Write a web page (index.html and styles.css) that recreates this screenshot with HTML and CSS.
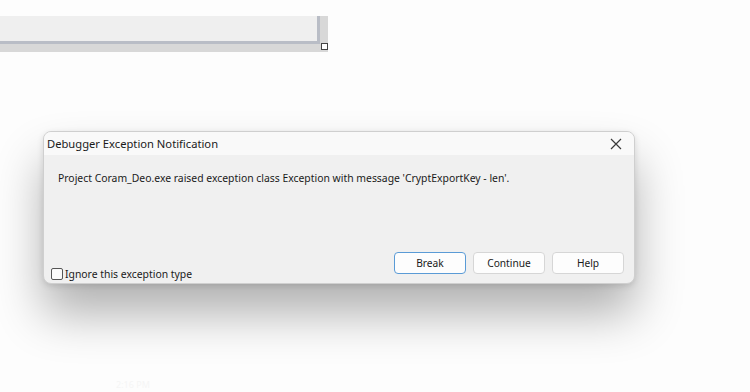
FILE: index.html
```html
<!DOCTYPE html>
<html>
<head>
<meta charset="utf-8">
<link rel="stylesheet" href="styles.css">
</head>
<body>
<div class="top">
  <div class="panel"></div>
  <div class="grip"></div>
</div>
<div class="dialog">
  <div class="titlebar">
    <span class="title">Debugger Exception Notification</span>
    <svg class="close" width="12" height="12" viewBox="0 0 12 12"><path d="M1 1L11 11M11 1L1 11" stroke="#3a3a3a" stroke-width="1.2" fill="none"/></svg>
  </div>
  <div class="content">
    <p class="msg">Project Coram_Deo.exe raised exception class Exception with message 'CryptExportKey - len'.</p>
    <div class="footer">
      <label class="check"><span class="box"></span>Ignore this exception type</label>
      <div class="buttons">
        <button class="btn default">Break</button>
        <button class="btn">Continue</button>
        <button class="btn">Help</button>
      </div>
    </div>
  </div>
</div>
<div class="taskbar"><span class="clock">2:16 PM</span></div>
</body>
</html>
```
FILE: styles.css
```css
html, body {
  margin: 0;
  padding: 0;
  background: #fdfdfd;
  width: 750px;
  height: 392px;
  overflow: hidden;
  font-family: "Noto Sans", "Open Sans", sans-serif;
}
.top {
  position: relative;
  padding-top: 16px;
  width: 328px;
  height: 34px;
}
.panel {
  width: 320px;
  height: 28px;
  box-sizing: border-box;
  background: #efefef;
  border-right: 3px solid #b9bdc6;
  border-bottom: 3px solid #b9bdc6;
  box-shadow: 3px 3px 0 5px #d8d8d8;
  clip-path: inset(0 -8px -8px 0);
}
.grip {
  position: absolute;
  left: 321px;
  top: 43px;
  width: 5px;
  height: 5px;
  border: 1px solid #444;
  background: #fff;
}
.dialog {
  margin: 81px 0 0 43px;
  width: 592px;
  height: 153px;
  box-sizing: border-box;
  border: 1px solid #cfcfcf;
  border-radius: 8px;
  background: #f0f0f0;
  box-shadow: 0 30px 48px rgba(0,0,0,0.30), 0 2px 6px rgba(0,0,0,0.12);
  display: flex;
  flex-direction: column;
  overflow: hidden;
}
.titlebar {
  height: 23px;
  background: #f9f9f9;
  display: flex;
  align-items: center;
  justify-content: space-between;
  padding: 0 12px 0 3px;
}
.title {
  font-size: 11.2px;
  color: #1a1a1a;
}
.close { display: block; }
.content {
  flex: 1;
  display: flex;
  flex-direction: column;
  padding: 0 10px 0 6px;
}
.msg {
  margin: 16px 0 0 8px;
  font-size: 10.4px;
  color: #1a1a1a;
}
.footer {
  margin-top: auto;
  display: flex;
  justify-content: space-between;
  align-items: flex-end;
  padding-bottom: 8px;
}
.check {
  display: flex;
  align-items: center;
  font-size: 10.4px;
  color: #1a1a1a;
  margin-bottom: -6px;
  margin-left: 1px;
}
.box {
  width: 10px;
  height: 10px;
  border: 1px solid #555;
  border-radius: 2px;
  background: #fafafa;
  margin-right: 2px;
}
.buttons {
  display: flex;
  gap: 7px;
  margin-bottom: 1px;
}
.btn {
  width: 72px;
  height: 22px;
  box-sizing: border-box;
  border: 1px solid #d6d6d6;
  border-radius: 4px;
  background: #fdfdfd;
  font-family: "Noto Sans", "Open Sans", sans-serif;
  font-size: 10.2px;
  color: #1a1a1a;
  padding: 0;
}
.btn.default {
  border: 1px solid #5a9bd6;
}
.taskbar {
  position: absolute;
  left: 0;
  top: 356px;
  width: 750px;
  height: 36px;
}
.clock {
  position: absolute;
  left: 116px;
  top: 22px;
  font-size: 9px;
  color: #f5f5f5;
}
```
